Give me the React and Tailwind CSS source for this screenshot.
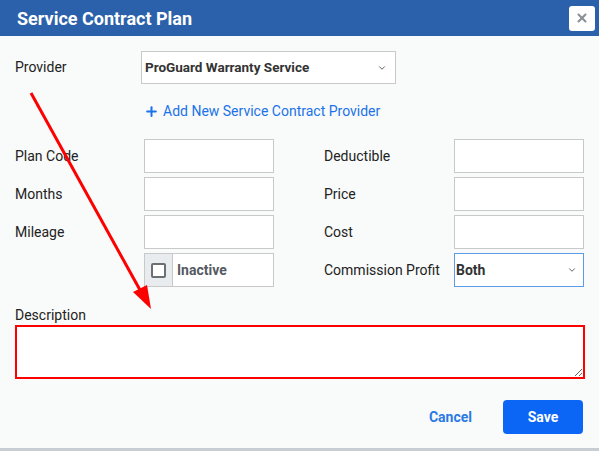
import { ChevronDown, Plus, X } from "lucide-react";

const font = { fontFamily: "Roboto, 'Liberation Sans', sans-serif" };

function Field({ label, children, labelW }) {
  return (
    <div className="flex items-center h-[34px]">
      <div className={`${labelW} text-[14px] text-[#222]`}>{label}</div>
      {children}
    </div>
  );
}

function Input({ w }) {
  return <div className={`${w} h-[34px] bg-white border border-[#c9c9c9]`}></div>;
}

export default function App() {
  return (
    <div className="relative w-[599px] h-[451px] bg-[#f9fafa] overflow-hidden" style={font}>
      {/* header */}
      <div className="h-9 bg-[#2b61ab] flex items-center justify-between pl-[17px] pr-[4px]">
        <h1 className="text-white font-bold text-[18px]">Service Contract Plan</h1>
        <button className="w-[26px] h-[25px] bg-white rounded-[3px] flex items-center justify-center">
          <X size={14} strokeWidth={3.5} className="text-[#8a8f96]" />
        </button>
      </div>

      <div className="px-[15px]">
        {/* provider */}
        <div className="flex items-center mt-[15px]">
          <div className="w-[126px] text-[14px] text-[#222]">Provider</div>
          <div className="w-[255px] h-[33px] bg-white border border-[#c9c9c9] flex items-center justify-between pl-[3px] pr-[8px]">
            <span className="text-[13.5px] font-bold text-[#333]">ProGuard Warranty Service</span>
            <ChevronDown size={10} strokeWidth={2} className="text-[#444]" />
          </div>
        </div>

        <div className="flex items-center gap-[4px] pl-[129px] mt-[17px] h-[20px] text-[#1a73e8]">
          <Plus size={15} strokeWidth={3.2} />
          <span className="text-[14px]">Add New Service Contract Provider</span>
        </div>

        {/* grid */}
        <div className="flex gap-[50px] mt-[18px]">
          <div className="flex flex-col gap-[4px]">
            <Field label="Plan Code" labelW="w-[129px]"><Input w="w-[130px]" /></Field>
            <Field label="Months" labelW="w-[129px]"><Input w="w-[130px]" /></Field>
            <Field label="Mileage" labelW="w-[129px]"><Input w="w-[130px]" /></Field>
            <Field label="" labelW="w-[129px]">
              <div className="w-[130px] h-[34px] flex border border-[#c9c9c9] bg-white">
                <div className="w-[28px] bg-[#e9ecef] border-r border-[#c9c9c9] flex items-center justify-center">
                  <div className="w-[15px] h-[15px] border-2 border-[#6b6e75] rounded-[2px] bg-white"></div>
                </div>
                <div className="flex items-center pl-[4px] text-[14px] font-bold text-[#555a62]">Inactive</div>
              </div>
            </Field>
          </div>
          <div className="flex flex-col gap-[4px]">
            <Field label="Deductible" labelW="w-[130px]"><Input w="w-[130px]" /></Field>
            <Field label="Price" labelW="w-[130px]"><Input w="w-[130px]" /></Field>
            <Field label="Cost" labelW="w-[130px]"><Input w="w-[130px]" /></Field>
            <Field label="Commission Profit" labelW="w-[130px]">
              <div className="w-[130px] h-[34px] bg-white border border-[#5b9be8] flex items-center justify-between pl-[1px] pr-[6px]">
                <span className="text-[14px] font-bold text-[#333]">Both</span>
                <ChevronDown size={10} strokeWidth={2} className="text-[#444]" />
              </div>
            </Field>
          </div>
        </div>

        {/* description */}
        <div className="mt-[20px] text-[14px] text-[#222] leading-[16px]">Description</div>
        <textarea className="block mt-[2px] w-[570px] h-[54px] bg-white border-2 border-[#ff0000] outline-none"></textarea>

        {/* footer */}
        <div className="flex items-center justify-end gap-[31px] mt-[21px] pr-px">
          <button className="text-[14px] font-bold text-[#2a7ae4]">Cancel</button>
          <button className="w-[80px] h-[34px] rounded-[4px] bg-[#0b66f6] text-white text-[14px] font-bold">Save</button>
        </div>
      </div>

      <div className="absolute left-0 right-0 bottom-0 h-[3px] bg-[#c8ccd3]"></div>

      {/* annotation arrow */}
      <svg className="absolute inset-0 pointer-events-none" width="599" height="451">
        <line x1="31" y1="93" x2="140" y2="290" stroke="#ff0000" strokeWidth="3" />
        <polygon points="151,309 133,292 147,285" fill="#ff0000" />
      </svg>
    </div>
  );
}
